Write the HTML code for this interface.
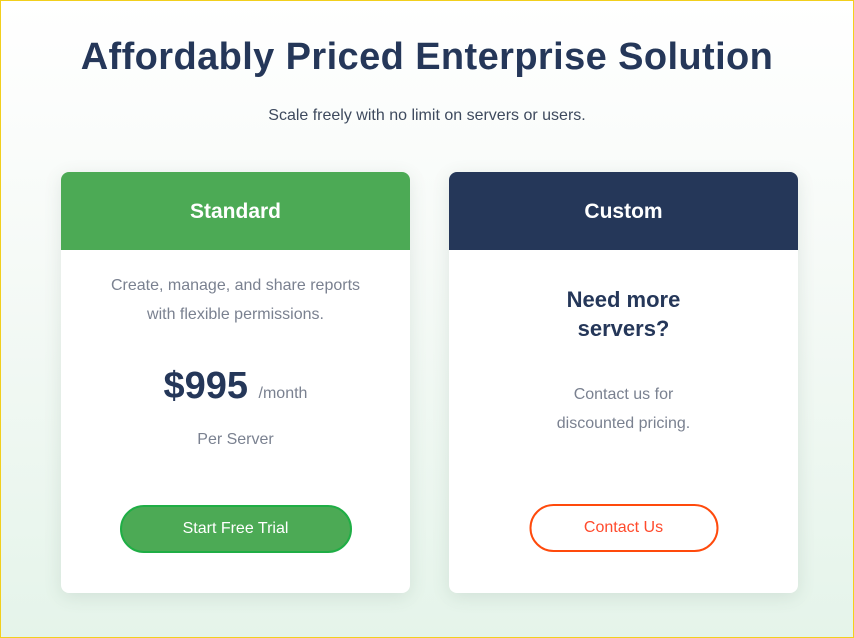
<!DOCTYPE html>
<html><head><style>
*{margin:0;padding:0;box-sizing:border-box}
body{width:854px;height:638px;overflow:hidden;font-family:"Liberation Sans",sans-serif;}
.page{position:relative;width:854px;height:638px;border:1px solid #f2cf1d;background:linear-gradient(180deg,#ffffff 0%,#f6faf7 40%,#e5f4ea 100%);}
h1{position:absolute;top:35px;left:0;width:852px;text-align:center;font-size:38px;font-weight:bold;color:#253759;letter-spacing:0.4px}
.sub{position:absolute;top:106px;left:0;width:852px;text-align:center;font-size:16px;color:#3e4a5e}
.card{position:absolute;top:171px;width:349px;height:421px;background:#fff;border-radius:8px;box-shadow:0 4px 18px rgba(60,90,70,0.12);overflow:hidden;text-align:center}
.hd{height:78px;color:#fff;font-size:21px;font-weight:bold;line-height:80px}
.desc{font-size:16px;color:#7a8190;line-height:29px}
.btn{position:absolute;left:50%;transform:translateX(-50%);border-radius:24px;font-size:16px;line-height:44px}
</style></head><body><div class="page">
<h1>Affordably Priced Enterprise Solution</h1>
<div class="sub">Scale freely with no limit on servers or users.</div>
<div class="card" style="left:60px">
<div class="hd" style="background:#4caa55">Standard</div>
<div class="desc" style="margin-top:21px">Create, manage, and share reports<br>with flexible permissions.</div>
<div style="margin-top:36px;color:#253759"><span style="font-size:38px;font-weight:bold">$995</span> <span style="font-size:16px;color:#7a8190;margin-left:6px">/month</span></div>
<div class="desc" style="margin-top:17px">Per Server</div>
<div class="btn" style="top:333px;width:232px;height:48px;background:#4caa55;border:2px solid #1fae45;color:#fff">Start Free Trial</div>
</div>
<div class="card" style="left:448px">
<div class="hd" style="background:#253759">Custom</div>
<div style="margin-top:35px;font-size:22px;font-weight:bold;color:#253759;line-height:29px">Need more<br>servers?</div>
<div class="desc" style="margin-top:37px">Contact us for<br>discounted pricing.</div>
<div class="btn" style="top:332px;width:189px;height:48px;border:2px solid #ff4a0c;color:#ff4a2c;background:#fff">Contact Us</div>
</div>
</div></body></html>
